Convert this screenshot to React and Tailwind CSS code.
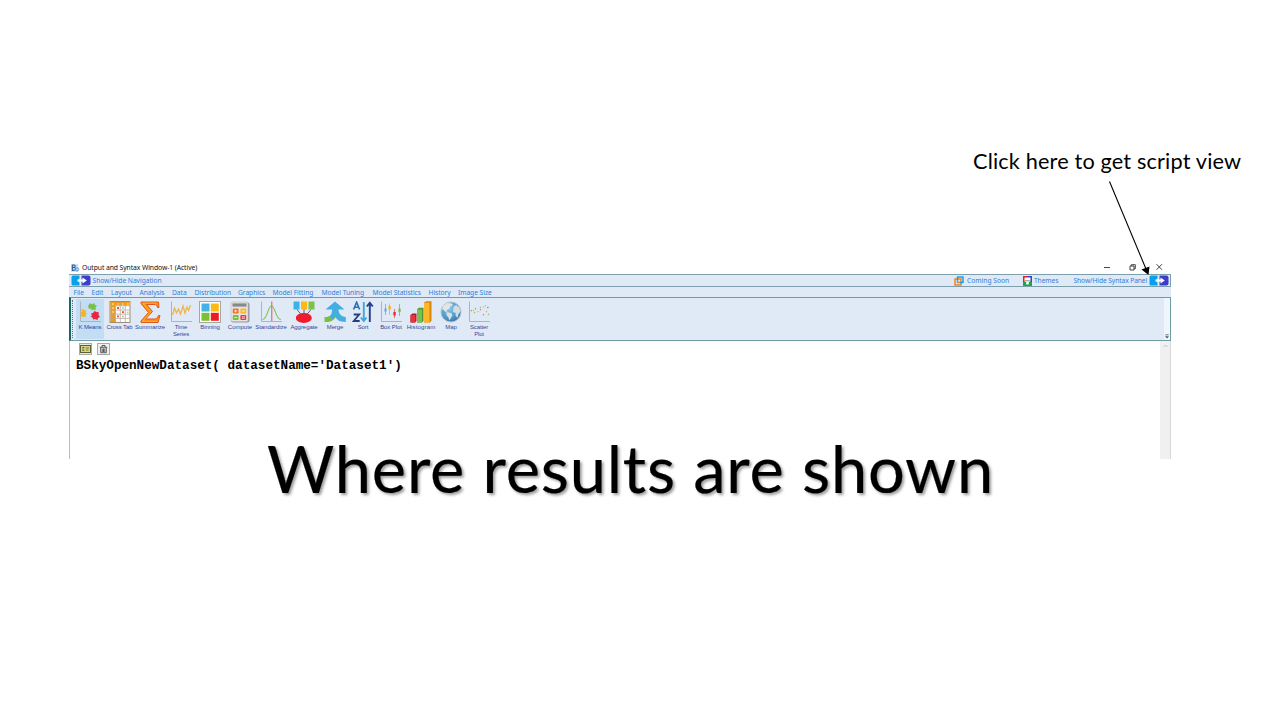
import React from 'react';

function Axes() {
  return <path d="M1.5 0.5V20.5H22" fill="none" stroke="#a9b4bd" strokeWidth="1" />;
}

function Icon({ children }) {
  return (
    <svg className="block h-[22px] w-[22px] shrink-0" viewBox="0 0 22 22">
      {children}
    </svg>
  );
}

const KMeans = () => (
  <Icon>
    <Axes />
    <path d="M2.5 8.5l2-.5.5 1.5 2-.5-.5 2.5 1.5 1-1.5 1 .5 2.5-2-.5-1 1-1-1.5-1.5.5 1-2.5-1-1.5 1.5-1z" fill="#fbb117" />
    <path d="M9 5l2-3 2 1.5 2-1.5 1 2 2 .5-1.5 2 .5 2.5-2.5-.5-1.5 1-1-2-2 .5z" fill="#7cc043" />
    <path d="M12 12.5l2-.5 1.5-2 2 1 2.5.5-.5 2.5 1.5 2-2 1-.5 2-2.5-1-2 .5-.5-2-2-1 1.5-1z" fill="#ec2539" />
  </Icon>
);

const CrossTab = () => (
  <Icon>
    <rect x="1" y="0.5" width="20" height="21" fill="#fff" stroke="#9c8c7c" />
    <rect x="1.5" y="1" width="19" height="3.5" fill="#f39a13" />
    <rect x="1.5" y="1" width="5" height="20" fill="#f39a13" />
    <path d="M1 4.8H21M1 9H21M1 13.2H21M1 17.4H21M6.5 1V21M11.3 1V21M16.3 1V21" stroke="#b9aaa0" strokeWidth=".8" />
    <path d="M3 3h2M3 7h2M3 11h2M8.2 3h1.5M13 3h1.5M18 3h1.5" stroke="#fff3c4" strokeWidth="1.2" />
    <path d="M8 7h2M8 15.4h2M13 11.2h2" stroke="#e3574f" strokeWidth="1.8" />
    <path d="M13 7h2M18 11.2h1.5M13 15.4h2" stroke="#9fd2a8" strokeWidth="1.5" />
  </Icon>
);

const Summarize = () => (
  <Icon>
    <path d="M2 1H19.5L20 6.5H18.5C18 4 17 3.5 15 3.5H7.5L13.5 10.5 6.5 18H15.5C17.5 18 18.5 17 19.5 14.5H21L19 21.5H2V20L9.5 11.5 2 2.5Z" fill="#fd9312" stroke="#e2571f" strokeWidth="1" />
    <path d="M4 2.2H17.5M4 2.4L11.5 11 3.5 20.5H18" fill="none" stroke="#ffbd2e" strokeWidth=".7" />
  </Icon>
);

const TimeSeries = () => (
  <Icon>
    <Axes />
    <path d="M2.5 14L4.5 7 6.5 12 8.5 8 10.5 13 13 5 15 12 17 6 18.5 9.5 20.5 4" fill="none" stroke="#efb44d" strokeWidth="1.3" />
  </Icon>
);

const Binning = () => (
  <Icon>
    <rect x="0.5" y="0.5" width="21" height="21" fill="#fff" stroke="#aaa69e" />
    <rect x="2.5" y="2.5" width="8" height="8" fill="#43b3e5" />
    <rect x="11.8" y="2.5" width="8" height="8" fill="#fdb913" />
    <rect x="2.5" y="11.8" width="8" height="8" fill="#7cc135" />
    <rect x="11.8" y="11.8" width="8" height="8" fill="#ed1c24" />
  </Icon>
);

const Compute = () => (
  <Icon>
    <rect x="2" y="1.5" width="18.5" height="20" rx="1.8" fill="#9b9b9b" />
    <rect x="2" y="1" width="17" height="19.6" rx="1.5" fill="#e4e3e2" stroke="#b5b3b2" strokeWidth=".5" />
    <rect x="3.5" y="2.4" width="14" height="3.2" fill="#85898a" />
    <rect x="3.8" y="7.5" width="5.8" height="5" rx="1" fill="#f36b28" />
    <rect x="11.4" y="7.5" width="5.8" height="5" rx="1" fill="#fdb724" />
    <rect x="3.8" y="14" width="5.8" height="5" rx="1" fill="#7bbd42" />
    <rect x="11.4" y="14" width="5.8" height="5" rx="1" fill="#ed3440" />
    <path d="M5 10h3.4M6.7 8.5v3M12.6 10H16M5.2 16.5h3M12.8 15.8H16M12.8 17.3H16" stroke="#fff" strokeWidth=".7" />
  </Icon>
);

const Standardize = () => (
  <Icon>
    <Axes />
    <path d="M2.5 18.5C8 18 7.5 5 11.5 5S15 18 21 18.5" fill="none" stroke="#83c65f" strokeWidth="1.2" />
    <path d="M11.8 0.5V20" stroke="#e65059" strokeWidth="1" />
  </Icon>
);

const Aggregate = () => (
  <Icon>
    <path d="M4 8.5L8.5 14M11 8V14M18 8.5L13.5 14" stroke="#60656b" strokeWidth="1" />
    <rect x="0.5" y="0.5" width="6" height="8" fill="#3eb2e5" />
    <rect x="8" y="0.5" width="6" height="8" fill="#fdb813" />
    <rect x="15.5" y="0.5" width="6" height="8" fill="#7dc242" />
    <ellipse cx="10.8" cy="17" rx="8" ry="5" fill="#ed1c2e" />
  </Icon>
);

const Merge = () => (
  <Icon>
    <path d="M0.5 16C5 16.5 8.5 14 9.3 9.5H13V14C10.5 19.5 6 21.5 0.5 21Z" fill="#78c043" />
    <path d="M11 .5L20.5 8.5H14.5C14.5 12.5 17 15.5 21.8 16V21C15 21 12 18 11 15 10.5 16 9.5 17.5 8.5 18.3 7.5 17 6.5 16 5.5 15.5 7.5 14 8 11.5 8 8.5H1.5Z" fill="#43aee0" />
  </Icon>
);

const Sort = () => (
  <Icon>
    <path d="M1.6 8.5L4.6 1.2 7.6 8.5M2.8 6.2H6.6" fill="none" stroke="#2872b8" strokeWidth="1.6" />
    <path d="M1.7 13.5H7.2L1.8 20H7.7" fill="none" stroke="#233e87" strokeWidth="1.8" />
    <path d="M11.8 1V19M8.8 16.5L11.8 20 14.5 16.5" fill="none" stroke="#42a6d9" strokeWidth="1.9" />
    <path d="M17.8 21V3M14.8 5.5L17.8 1.8 20.8 5.5" fill="none" stroke="#233f8f" strokeWidth="1.9" />
  </Icon>
);

const BoxPlot = () => (
  <Icon>
    <Axes />
    <path d="M5.5 3V14" stroke="#65bce5" strokeWidth=".9" />
    <path d="M9.5 2.5V14" stroke="#f8b936" strokeWidth=".9" />
    <path d="M14.5 8V17" stroke="#ed6068" strokeWidth=".9" />
    <path d="M19.5 3V15" stroke="#83c35d" strokeWidth=".9" />
    <rect x="4.5" y="7.5" width="2" height="3" fill="#45b1e1" />
    <rect x="8.5" y="5" width="2.3" height="3.5" fill="#fbb016" />
    <rect x="13.4" y="11" width="2.3" height="3.5" fill="#ea2339" />
    <rect x="18.4" y="7.5" width="2.3" height="3.5" fill="#7cc242" />
  </Icon>
);

const Histogram = () => (
  <Icon>
    <path d="M0.5 14L2.5 12.5H6.5V20L5 21.5H.5Z" fill="#ad182d" />
    <rect x="0.5" y="14" width="4.8" height="7.5" fill="#ec3140" />
    <path d="M7 8.5L9 6.8H13.5V20L12 21.5H7Z" fill="#4f9637" />
    <rect x="7" y="8.5" width="5" height="13" fill="#7bc04a" />
    <path d="M14 1.5L16 .3H21.5V20L19.8 21.5H14Z" fill="#d7870a" />
    <rect x="14" y="1.7" width="5.5" height="19.8" fill="#fcb62b" />
  </Icon>
);

const MapIcon = () => (
  <Icon>
    <defs>
      <radialGradient id="globe" cx=".4" cy=".3" r=".75">
        <stop offset="0" stopColor="#8dc9ed" />
        <stop offset=".65" stopColor="#4c98cc" />
        <stop offset="1" stopColor="#396f9f" />
      </radialGradient>
    </defs>
    <circle cx="11" cy="11" r="10" fill="url(#globe)" stroke="#b2bfca" strokeWidth="1" />
    <path d="M3 5L7 2 11 2.2 13 4 10.5 5.2 9 8 6.5 9 7.5 11 5 10.5 3.5 8.5 2 9Z" fill="#e3e5e2" />
    <path d="M6.5 11L11 12 12.5 14 9.5 19.5 8.3 16.2 6.5 14Z" fill="#dce0df" />
    <path d="M13.5 6L16 4 19.5 6.5 20.5 10.5 18.5 13 17.5 17 15.5 14.5 15.7 12 13 11Z" fill="#d2dce1" />
  </Icon>
);

const Scatter = () => (
  <Icon>
    <Axes />
    <path d="M3 10l.8-.8M7 7.2l1 .8M12 9l1-.6M19.5 6l.8 1M15 14l.8-.8" stroke="#ed6a62" strokeWidth="1.3" />
    <path d="M5 9l1 1M9.5 11l1-.7M15 6.6l1-1M18 10l1 1" stroke="#f5b34b" strokeWidth="1.3" />
    <path d="M6 12l1-.8M12 6l.8.8M17 5l1-.5M20 13l1 .8" stroke="#90c36c" strokeWidth="1.3" />
  </Icon>
);

const tools = [
  { icon: KMeans, label: 'K Means', cell: 'w-[28px] bg-[#c3ddf5]', text: 'tracking-[-0.1px]' },
  { icon: CrossTab, label: 'Cross Tab', cell: 'w-[31px]', text: 'tracking-[-0.1px]' },
  { icon: Summarize, label: 'Summarize', cell: 'w-[30px]', text: 'tracking-[-0.05px]' },
  { icon: TimeSeries, label: 'Time\nSeries', cell: 'w-[32px]', text: 'tracking-[-0.15px]' },
  { icon: Binning, label: 'Binning', cell: 'w-[26px]', text: 'tracking-[-0.1px]' },
  { icon: Compute, label: 'Compute', cell: 'w-[34px]', text: 'tracking-[0px]' },
  { icon: Standardize, label: 'Standardize', cell: 'w-[28px]', text: 'tracking-[-0.05px]' },
  { icon: Aggregate, label: 'Aggregate', cell: 'w-[38px]', text: 'tracking-[-0.05px]' },
  { icon: Merge, label: 'Merge', cell: 'w-[24px]', text: 'tracking-[-0.1px]' },
  { icon: Sort, label: 'Sort', cell: 'w-[32px]', text: 'tracking-[-0.1px]' },
  { icon: BoxPlot, label: 'Box Plot', cell: 'w-[24px]', text: 'tracking-[-0.1px]' },
  { icon: Histogram, label: 'Histogram', cell: 'w-[36px]', text: 'tracking-[0.15px]' },
  { icon: MapIcon, label: 'Map', cell: 'w-[24px]', text: 'tracking-[-0.1px]' },
  { icon: Scatter, label: 'Scatter\nPlot', cell: 'w-[32px]', text: 'tracking-[-0.15px]' },
];

const menus = [
  ['File', 'w-[18px]'],
  ['Edit', 'w-[19.5px]'],
  ['Layout', 'w-[28.5px]'],
  ['Analysis', 'w-[32.5px]'],
  ['Data', 'w-[22.5px]'],
  ['Distribution', 'w-[43.5px]'],
  ['Graphics', 'w-[34.5px]'],
  ['Model Fitting', 'w-[49px]'],
  ['Model Tuning', 'w-[51px]'],
  ['Model Statistics', 'w-[56px]'],
  ['History', 'w-[29.5px]'],
  ['Image Size', 'w-[40px]'],
];

function PanelToggle() {
  return (
    <svg className="block h-[11px] w-[20px] shrink-0" viewBox="0 0 20 11">
      <path d="M2 .5H8.5V3.5Q6 5.5 8.5 7.5V10.5H2Q.5 10.5.5 9V2Q.5.5 2 .5Z" fill="#08a0e8" />
      <path d="M10.5 .5H17.5Q19.5 .5 19.5 2.5V8.5Q19.5 10.5 17.5 10.5H10.5Z" fill="#3d3dcb" />
      <path d="M6.5 4.6H11.5V2.6L15.8 5.5 11.5 8.4V6.4H6.5Z" fill="#fff" />
    </svg>
  );
}

function TitleBar() {
  return (
    <div className="flex h-[12px] items-center pl-[2px] text-[6.8px] text-[#111]">
      <svg className="mr-[2.5px] block h-[9px] w-[8.5px] shrink-0 -translate-y-[0.5px]" viewBox="0 0 9 9">
        <rect x="0" y="0" width="7.5" height="8.5" fill="#c9dff3" />
        <path d="M1.4 1V7.3M1.4 1.3H3Q4.6 1.5 4.4 2.8 4 4 1.8 4H3.5Q5 4.3 4.8 5.7 4.3 7.2 1.4 7" fill="none" stroke="#24589c" strokeWidth="1.1" />
        <circle cx="6.5" cy="6" r="1.7" fill="none" stroke="#4d91cc" strokeWidth="1" />
      </svg>
      <span className="tracking-[-0.09px]">Output and Syntax Window-1 (Active)</span>
      <svg className="ml-auto mr-[8px] block h-[8px] w-[60px] shrink-0 -translate-y-px" viewBox="0 0 60 8" fill="none" stroke="#303030" strokeWidth=".9">
        <path d="M1 4.5H7" />
        <path d="M27 3H31V7H27ZM28.3 3V1.7H32.3V5.7H31" />
        <path d="M53.5 1.2L59 6.8M59 1.2L53.5 6.8" />
      </svg>
    </div>
  );
}

function NavigationBar() {
  return (
    <div className="flex h-[13px] items-center border-y border-r border-[#7c9fab] pl-[1.5px]">
      <PanelToggle />
      <span className="ml-[2px] tracking-[-0.04px]">Show/Hide Navigation</span>
      <div className="ml-auto flex items-center">
        <svg className="block h-[10px] w-[10px]" viewBox="0 0 10 10" fill="none">
          <rect x="1" y="3" width="6" height="6" stroke="#f58220" strokeWidth="1.5" />
          <rect x="3.5" y="1" width="5.5" height="5.5" stroke="#159be0" strokeWidth="1.4" />
          <path d="M3.5 4V6.5H6" stroke="#f58220" strokeWidth="1" />
        </svg>
        <span className="ml-[3px] w-[56px]">Coming Soon</span>
        <svg className="block h-[10px] w-[9px]" viewBox="0 0 9 10">
          <path d="M0 0H5V2H2V6H0Z" fill="#ed1c24" />
          <path d="M5 0H9V6H7V2H5Z" fill="#3741c8" />
          <path d="M0 6H9V10H0Z" fill="#18a84a" />
          <path d="M1.5 1.5H7.5V5.5H5.8V8.6H3.2V5.5H1.5Z" fill="#fff" />
          <path d="M2 4.8H7" stroke="#606a70" strokeWidth=".8" />
        </svg>
        <span className="ml-[2px] w-[39.5px] tracking-[-0.1px]">Themes</span>
        <span className="w-[75.5px] tracking-[-0.1px]">Show/Hide Syntax Panel</span>
        <PanelToggle />
        <div className="w-[1px]" />
      </div>
    </div>
  );
}

function Toolbar() {
  return (
    <div className="flex h-[44px] border border-l-2 border-[#6f9ba3] border-l-[#17666a]">
      <div className="my-[2px] ml-[1px] mr-px w-[3px] border-l border-dotted border-[#66727c]" />
      <div className="flex pt-px">
        {tools.map(({ icon: Glyph, label, cell, text }) => (
          <div key={label} className={`flex h-[40px] shrink-0 flex-col items-center pt-[2px] ${cell}`}>
            <Glyph />
            <span className={`mt-[1px] whitespace-pre text-center font-['Liberation_Sans',sans-serif] text-[6px] leading-[7px] text-[#34479b] ${text}`}>
              {label}
            </span>
          </div>
        ))}
      </div>
      <div className="ml-auto flex w-[6px] items-end justify-center bg-[#eff5fc] pb-px">
        <svg className="block h-[5px] w-[4px]" viewBox="0 0 4 5">
          <path d="M.3 .8H3.7" stroke="#555" strokeWidth=".8" />
          <path d="M0 2.2H4L2 4.5Z" fill="#555" />
        </svg>
      </div>
    </div>
  );
}

function OutputPane() {
  return (
    <div className="flex h-[118px] border-x border-l-[#b9bcbe] border-r-[#d8d8d8] bg-white">
      <div className="flex-1 pl-[6px] pt-[2px]">
        <div className="flex gap-[5px] pl-[2.5px]">
          <svg className="block h-[12px] w-[13px]" viewBox="0 0 13 12">
            <rect x=".5" y=".5" width="12" height="11" fill="#e9e9e9" stroke="#a8a8a8" />
            <rect x="1.5" y="2.5" width="10" height="7" fill="#d6d67c" stroke="#5d6132" />
            <path d="M3.5 4.5H5.5M3.5 7.5H5.5M6.5 5H10M7 7H9.5M4 4V8" stroke="#5f6534" strokeWidth=".8" />
          </svg>
          <svg className="block h-[12px] w-[13px]" viewBox="0 0 13 12">
            <rect x=".5" y=".5" width="12" height="11" fill="#f0f0f0" stroke="#a8a8a8" />
            <path d="M2.8 4.3H10.2M5 4V2.5H8V4M3.7 4.5V9.7H9.3V4.5M5.2 5.5V9M6.5 5.5V9M7.8 5.5V9" fill="none" stroke="#484848" strokeWidth=".9" />
          </svg>
        </div>
        <div className="mt-[4px] whitespace-pre font-['Liberation_Mono',monospace] text-[12.63px] font-bold leading-[14px] text-black">
          BSkyOpenNewDataset( datasetName='Dataset1')
        </div>
      </div>
      <div className="flex w-[10px] justify-center bg-[#f0f0f0] pt-[3px]">
        <svg className="block h-[4px] w-[5px]" viewBox="0 0 5 4">
          <path d="M.5 3L2.5 1 4.5 3" fill="none" stroke="#bbb" strokeWidth=".8" />
        </svg>
      </div>
    </div>
  );
}

export default function App() {
  return (
    <main className="relative flex h-[720px] w-[1280px] flex-col overflow-hidden bg-white font-['Lato',sans-serif] text-black">
      <div className="flex h-[262px] justify-end pr-[39px] pt-[147px]">
        <p className="h-[30px] w-[268px] whitespace-nowrap text-[21.7px] leading-[28px] tracking-[0.16px]">Click here to get script view</p>
      </div>
      <section className="ml-[69px] w-[1102px] font-['Noto_Sans',sans-serif]">
        <TitleBar />
        <div className="whitespace-nowrap bg-[#e0eaf6] text-[6.7px] leading-[10px] text-[#2f80dc]">
          <NavigationBar />
          <nav className="flex h-[10px] items-center pl-[4.5px] pt-[2px] tracking-[-0.05px]">
            {menus.map(([name, width]) => (
              <span key={name} className={`shrink-0 ${width}`}>{name}</span>
            ))}
          </nav>
          <Toolbar />
        </div>
        <OutputPane />
      </section>
      <h1 className="absolute left-[267px] top-[427px] whitespace-nowrap text-[65px] leading-[82px] tracking-[0.78px] [-webkit-text-stroke:0.2px_#000] [text-shadow:2px_2px_3px_rgba(0,0,0,0.4)]">
        Where results are shown
      </h1>
      <svg className="absolute left-[1100px] top-[175px] h-[105px] w-[60px]" viewBox="0 0 60 105">
        <path d="M9.5 6.5L46 94" stroke="#000" strokeWidth="1.1" />
        <path d="M48.5 100L41.5 94.5 49.5 91.5Z" fill="#000" />
      </svg>
    </main>
  );
}
